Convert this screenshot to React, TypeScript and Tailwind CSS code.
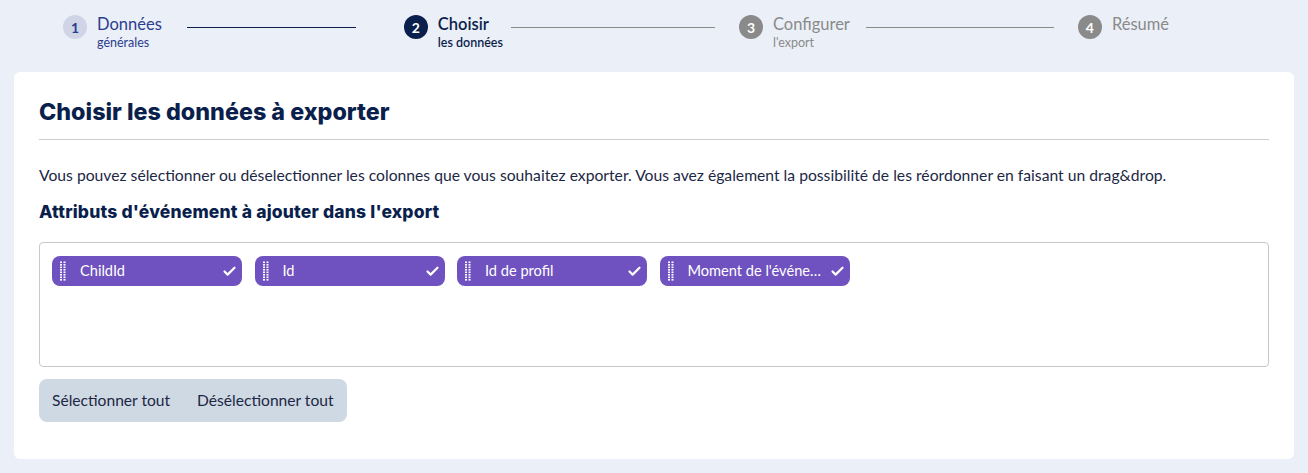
import { Check } from 'lucide-react';

const steps = [
  { n: 1, title: 'Données', sub: 'générales', state: 'done' },
  { n: 2, title: 'Choisir', sub: 'les données', state: 'active' },
  { n: 3, title: 'Configurer', sub: "l'export", state: 'todo' },
  { n: 4, title: 'Résumé', sub: '', state: 'todo' },
] as const;

const attributes = ['ChildId', 'Id', 'Id de profil', "Moment de l'événement"];

function StepItem({ step }: { step: (typeof steps)[number] }) {
  const circle =
    step.state === 'done'
      ? 'bg-[#cfd5e6] text-[#2a3d8f]'
      : step.state === 'active'
        ? 'bg-[#0b1f4d] text-white'
        : 'bg-[#8a8a8a] text-white';
  const title =
    step.state === 'done'
      ? 'text-[#2a3d8f]'
      : step.state === 'active'
        ? 'font-semibold text-[#0b1f4d]'
        : 'text-[#8a8a8a]';
  const sub =
    step.state === 'done'
      ? 'text-[#2a3d8f]'
      : step.state === 'active'
        ? 'font-semibold text-[#0b1f4d]'
        : 'text-[#8a8a8a]';
  return (
    <div className="flex shrink-0 items-start gap-[10px]">
      <span
        className={`mt-[2px] grid size-6 place-items-center rounded-full text-[14px] font-bold ${circle}`}
      >
        {step.n}
      </span>
      <div className="flex flex-col">
        <span className={`text-[16.5px] leading-[22px] ${title}`}>{step.title}</span>
        {step.sub && <span className={`text-[12.5px] leading-[16px] ${sub}`}>{step.sub}</span>}
      </div>
    </div>
  );
}

function DragHandle() {
  return (
    <svg width="6" height="20" viewBox="0 0 6 20" className="shrink-0">
      {Array.from({ length: 8 }).map((_, i) => (
        <g key={i} fill="white">
          <rect x="0" y={i * 2.5 + 0.5} width="2" height="1.6" />
          <rect x="3.5" y={i * 2.5 + 0.5} width="2" height="1.6" />
        </g>
      ))}
    </svg>
  );
}

function AttributeChip({ label }: { label: string }) {
  return (
    <div className="flex h-[30px] w-[190px] items-center rounded-lg bg-[#6f52bf] pl-[8px] pr-[5px] text-white">
      <DragHandle />
      <span className="ml-[14px] min-w-0 flex-1 truncate text-[14.6px]">{label}</span>
      <Check className="ml-2 size-[15px] shrink-0" strokeWidth={3.5} />
    </div>
  );
}

export default function App() {
  return (
    <div
      className="min-h-[473px] bg-[#ebeff7] px-[14px] pb-[14px] text-[#1c2745]"
      style={{ fontFamily: 'Lato, "Noto Sans", sans-serif' }}
    >
      <nav className="flex h-[72px] items-start pl-[49px] pt-[13px]">
        <StepItem step={steps[0]} />
        <div className="ml-[25px] mr-[48px] mt-[14px] h-px w-[169px] bg-[#0b1f4d]" />
        <StepItem step={steps[1]} />
        <div className="ml-[8px] mr-[24px] mt-[14px] h-px w-[204px] bg-[#8a8a8a]" />
        <StepItem step={steps[2]} />
        <div className="ml-[16px] mr-[24px] mt-[14px] h-px w-[188px] bg-[#8a8a8a]" />
        <StepItem step={steps[3]} />
      </nav>

      <section className="rounded-md bg-white px-[25px] pb-[37px] pt-[27px]">
        <h1
          className="border-b border-[#cccccc] pb-[14px] text-[23.3px] font-extrabold leading-[26px] text-[#0b1f4d]"
          style={{ fontFamily: 'Inter, "Open Sans", sans-serif' }}
        >
          Choisir les données à exporter
        </h1>
        <p className="mt-[25px] text-[15.7px] leading-[20px]">
          Vous pouvez sélectionner ou déselectionner les colonnes que vous souhaitez exporter. Vous
          avez également la possibilité de les réordonner en faisant un drag&amp;drop.
        </p>
        <h2
          className="mt-[15px] text-[17.5px] font-extrabold leading-[24px] tracking-[0.01em] text-[#0b1f4d]"
          style={{ fontFamily: 'Inter, "Open Sans", sans-serif' }}
        >
          Attributs d'événement à ajouter dans l'export
        </h2>

        <div className="mt-[18px] flex h-[125px] flex-wrap content-start gap-[12.5px] rounded border border-[#c8c8c8] px-[12px] pt-[13px]">
          {attributes.map((a) => (
            <AttributeChip key={a} label={a} />
          ))}
        </div>

        <div className="mt-[12px] inline-flex h-[43px] items-center gap-[27px] rounded-lg bg-[#cfd9e3] px-[13px] text-[15.6px] text-[#1c2745]">
          <button type="button">Sélectionner tout</button>
          <button type="button">Désélectionner tout</button>
        </div>
      </section>
    </div>
  );
}
